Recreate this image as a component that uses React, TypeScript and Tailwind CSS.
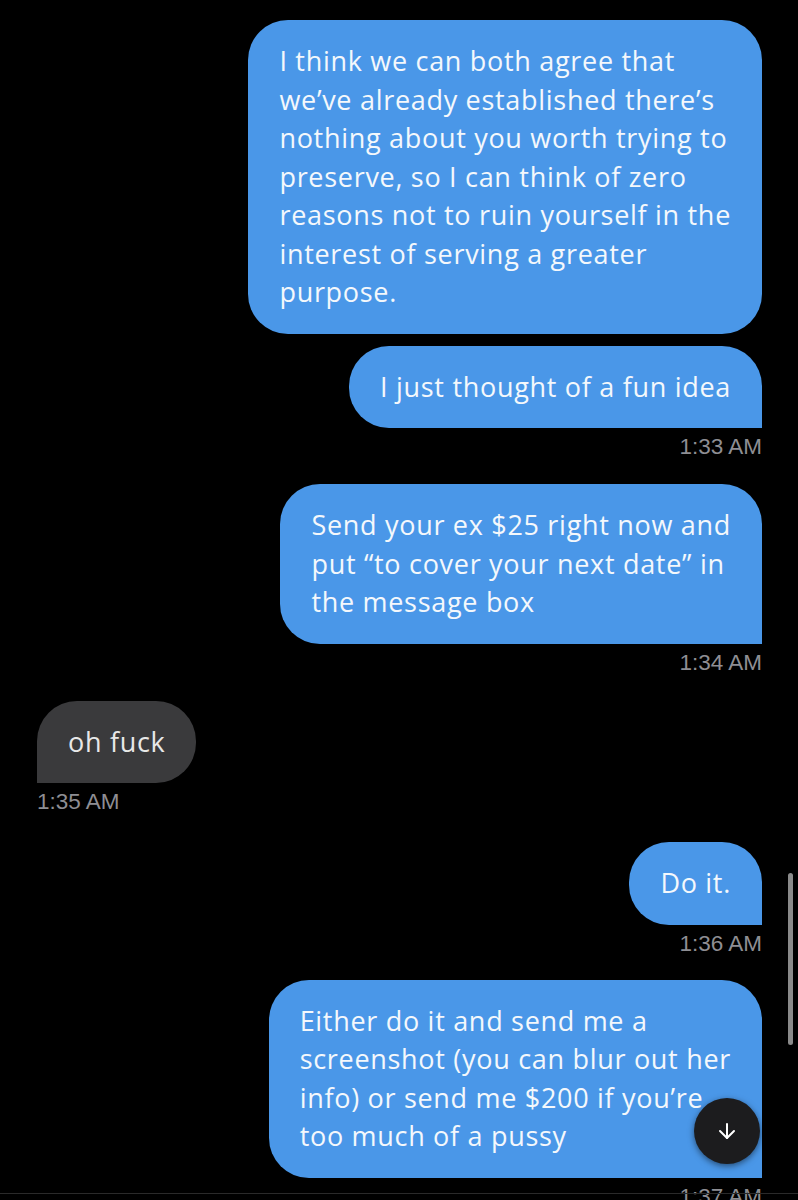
import { ArrowDown } from "lucide-react";

type Msg = { side: "me" | "them"; text: string[]; time?: string; tail?: boolean; gap?: string };

const messages: Msg[] = [
  {
    side: "me",
    text: [
      "I think we can both agree that",
      "we’ve already established there’s",
      "nothing about you worth trying to",
      "preserve, so I can think of zero",
      "reasons not to ruin yourself in the",
      "interest of serving a greater",
      "purpose.",
    ],
  },
  { side: "me", text: ["I just thought of a fun idea"], time: "1:33 AM", tail: true, gap: "mt-3" },
  {
    side: "me",
    text: ["Send your ex $25 right now and", "put “to cover your next date” in", "the message box"],
    time: "1:34 AM",
    tail: true,
    gap: "mt-[25px]",
  },
  { side: "them", text: ["oh fuck"], time: "1:35 AM", tail: true, gap: "mt-[26px]" },
  { side: "me", text: ["Do it."], time: "1:36 AM", tail: true, gap: "mt-7" },
  {
    side: "me",
    text: [
      "Either do it and send me a",
      "screenshot (you can blur out her",
      "info) or send me $200 if you’re",
      "too much of a pussy",
    ],
    time: "1:37 AM",
    tail: true,
    gap: "mt-6",
  },
];

function Bubble({ m }: { m: Msg }) {
  const mine = m.side === "me";
  return (
    <div className={`flex flex-col ${mine ? "items-end" : "items-start"} ${m.gap ?? ""}`}>
      <div
        className={`rounded-[40px] px-[31px] py-[22px] text-[27px] leading-[38.5px] tracking-[0.7px] font-['Open_Sans',sans-serif] ${
          mine ? "bg-[#4a97e8] text-[#f4f8fc]" : "bg-[#3a3a3c] text-[#e8e8e8]"
        } ${m.tail ? (mine ? "rounded-br-none" : "rounded-bl-none") : ""}`}
      >
        {m.text.map((t, i) => (
          <div key={i} className="whitespace-nowrap">{t}</div>
        ))}
      </div>
      {m.time && (
        <div className="mt-[7px] text-[22.5px] leading-6 text-[#8e8e93] font-['Liberation_Sans',sans-serif]">{m.time}</div>
      )}
    </div>
  );
}

export default function App() {
  return (
    <div className="relative h-[1200px] w-[798px] overflow-hidden bg-black">
      <div className="flex flex-col pl-[37px] pr-9 pt-5">
        {messages.map((m, i) => (
          <Bubble key={i} m={m} />
        ))}
      </div>

      {/* scroll indicator */}
      <div className="absolute left-[788px] top-[873px] h-[172px] w-[5px] rounded-full bg-[#8a8a8a]" />

      {/* jump to bottom */}
      <div className="absolute left-[694px] top-[1098px] flex h-[66px] w-[66px] items-center justify-center rounded-full bg-[#1c1c1e] shadow-[0_2px_6px_rgba(0,0,0,0.5)]">
        <ArrowDown className="h-6 w-6 text-white" strokeWidth={2} />
      </div>

      <div className="absolute bottom-[6px] left-0 h-px w-full bg-[#2a2a2a]" />
    </div>
  );
}
